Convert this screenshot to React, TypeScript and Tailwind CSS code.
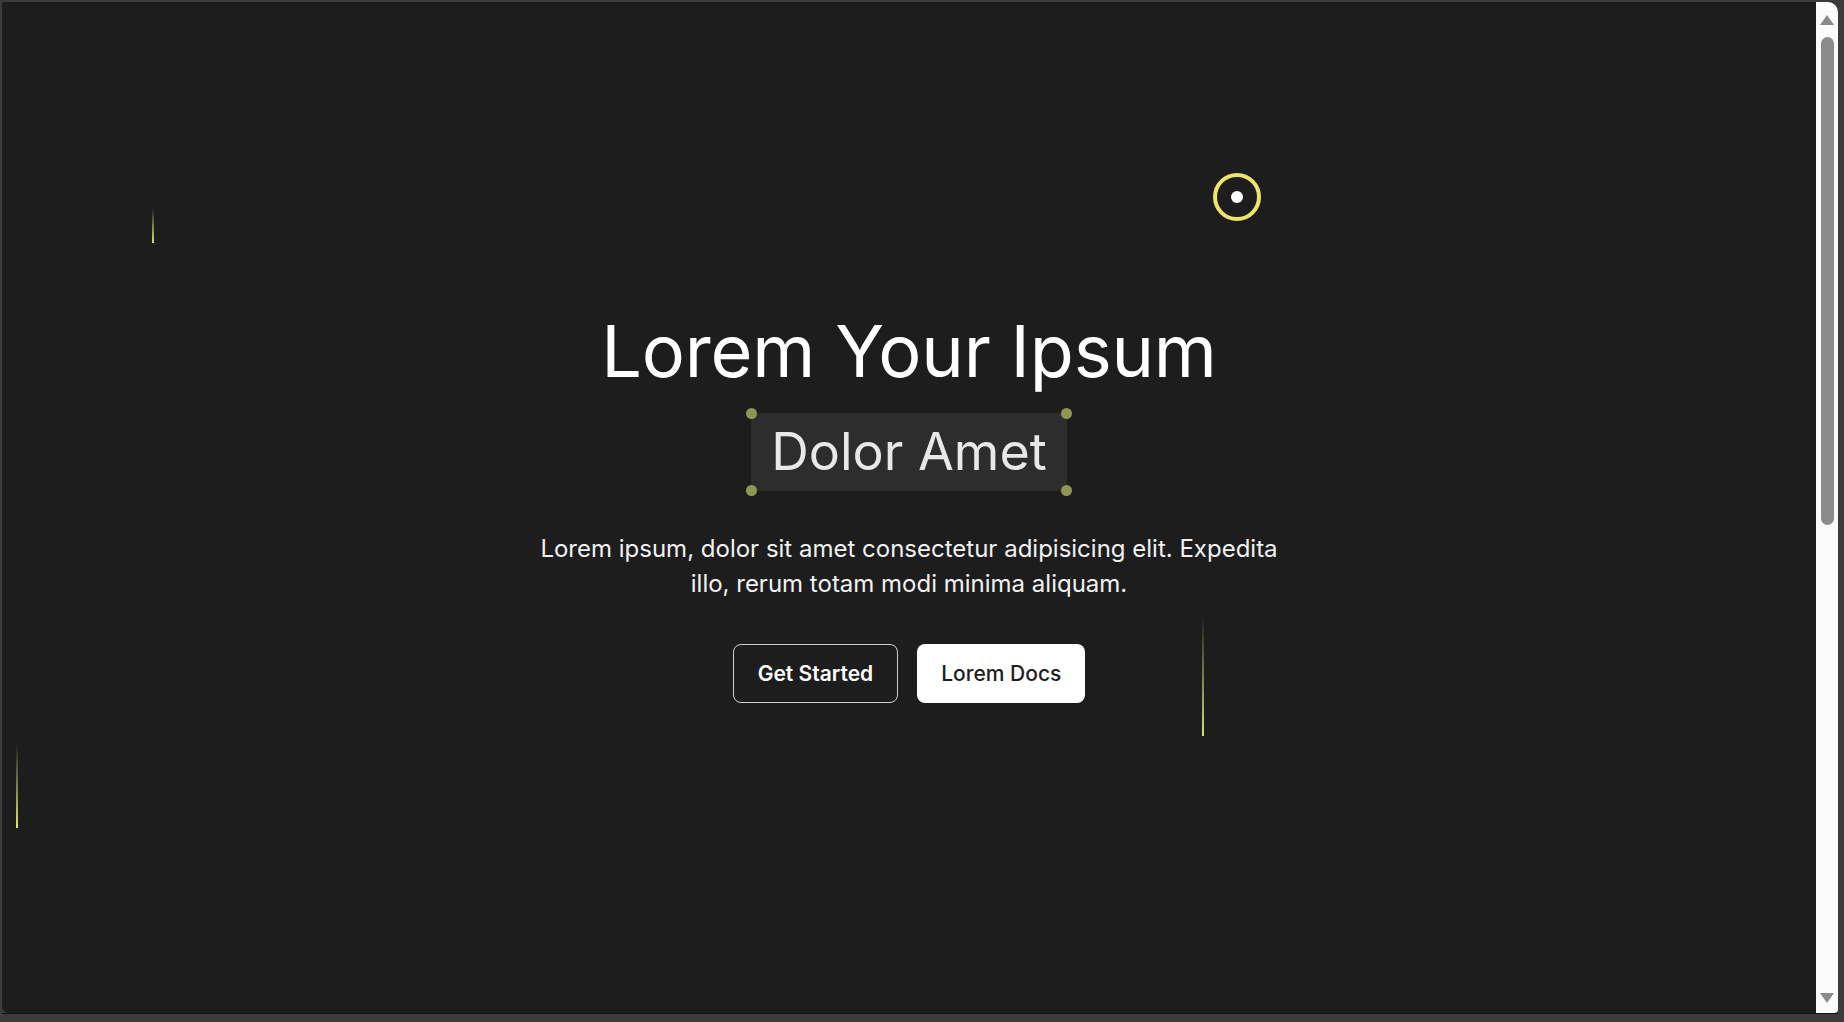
export default function App() {
  return (
    <div className="h-[1022px] w-[1844px] overflow-hidden bg-[#3b3b3b] pt-[2px] pl-[2px] pr-[6px] pb-[8px] font-['Inter',sans-serif]">
      <div className="flex h-full w-full border-b border-[#141414]">
        <main className="relative flex-1 rounded-bl-md bg-[#1d1d1d]">
          {/* falling streaks */}
          <span className="absolute left-[150px] top-[206px] h-[35px] w-[2px] bg-linear-to-b from-transparent to-[#d6df72]" />
          <span className="absolute left-[14px] top-[741px] h-[85px] w-[2px] bg-linear-to-b from-transparent to-[#dfe377]" />
          <span className="absolute left-[1200px] top-[613px] h-[121px] w-[2px] bg-linear-to-b from-transparent to-[#d6e07a]" />

          {/* cursor */}
          <div className="absolute left-[1211px] top-[171px] flex h-[48px] w-[48px] items-center justify-center rounded-full border-[4px] border-[#ece46b]">
            <span className="h-[12px] w-[12px] rounded-full bg-white" />
          </div>

          <section className="flex flex-col items-center pt-[313px]">
            <h1 className="text-[72px] leading-none font-normal tracking-[-0.2px] text-white">
              Lorem Your Ipsum
            </h1>

            <div className="relative mt-[26px] bg-[#2d2d2d] px-[20px] py-[13px]">
              <span className="block text-[52px] leading-none text-[#e8e8e8]">Dolor Amet</span>
              <span className="absolute -left-[5px] -top-[5px] h-[11px] w-[11px] rounded-full bg-[#8f9752]" />
              <span className="absolute -right-[5px] -top-[5px] h-[11px] w-[11px] rounded-full bg-[#8f9752]" />
              <span className="absolute -left-[5px] -bottom-[5px] h-[11px] w-[11px] rounded-full bg-[#8f9752]" />
              <span className="absolute -right-[5px] -bottom-[5px] h-[11px] w-[11px] rounded-full bg-[#8f9752]" />
            </div>

            <p className="mt-[40px] max-w-[780px] text-center text-[24px] leading-[35px] text-[#f2f2f2]">
              Lorem ipsum, dolor sit amet consectetur adipisicing elit. Expedita illo, rerum totam modi minima aliquam.
            </p>

            <div className="mt-[43px] flex gap-[19px]">
              <button className="h-[59px] rounded-lg border border-[#d0d0d0] px-[24px] text-[21px] font-semibold text-white">
                Get Started
              </button>
              <button className="h-[59px] rounded-lg bg-white px-[24px] text-[21px] font-medium text-[#1d1d1d]">
                Lorem Docs
              </button>
            </div>
          </section>
        </main>

        {/* scrollbar */}
        <div className="flex w-[22px] flex-col items-center rounded-tr-[10px] rounded-br-[4px] bg-[#fbfbfb] pt-[13px] pb-[10px]">
          <svg width="14" height="10" viewBox="0 0 14 10">
            <path d="M7 0 L14 10 L0 10 Z" fill="#8a8a8a" />
          </svg>
          <div className="mt-[12px] h-[488px] w-[13px] rounded-full bg-[#8a8a8a]" />
          <div className="flex-1" />
          <svg width="14" height="10" viewBox="0 0 14 10">
            <path d="M0 0 L14 0 L7 10 Z" fill="#8a8a8a" />
          </svg>
        </div>
      </div>
    </div>
  )
}
